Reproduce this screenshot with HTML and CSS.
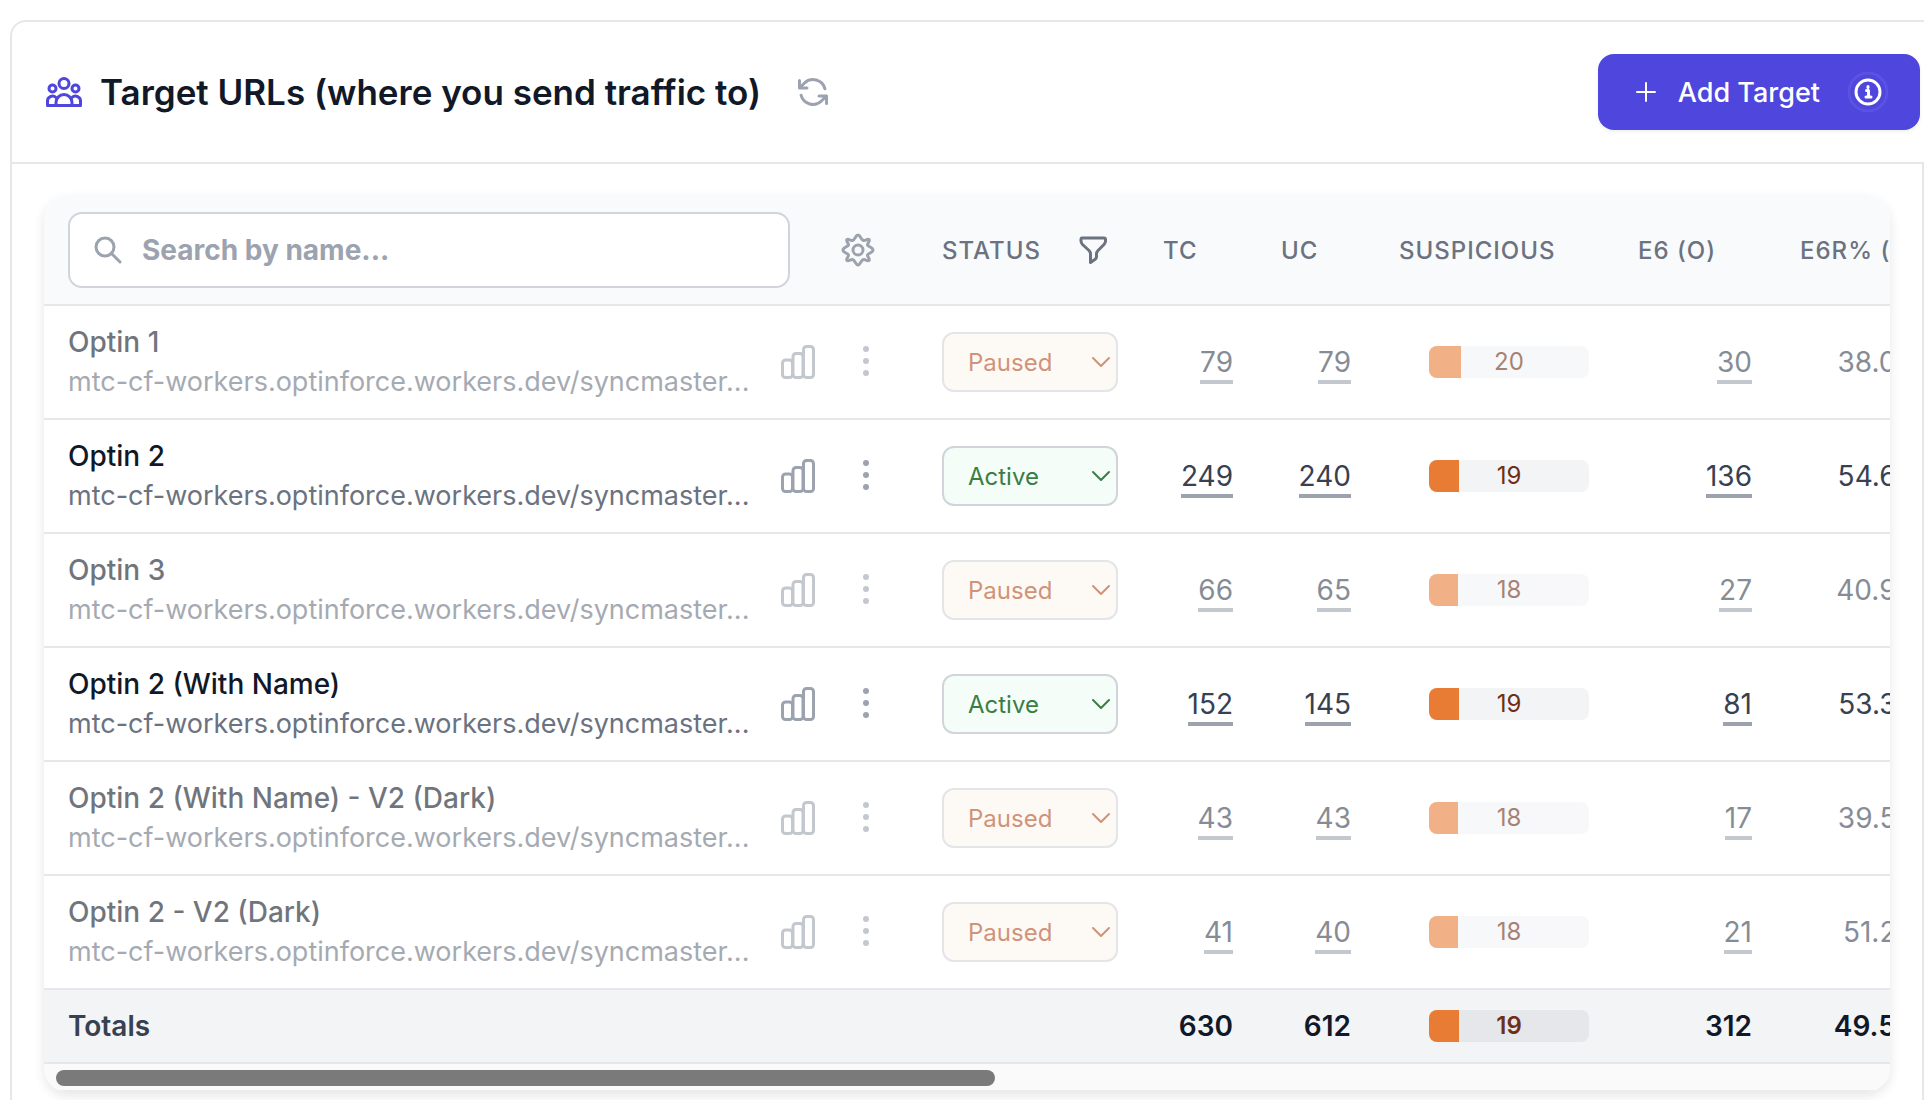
FILE: index.html
```html
<!DOCTYPE html>
<html lang="en">
<head>
    <meta charset="UTF-8">
    <meta name="viewport" content="width=device-width, initial-scale=1.0">
    <title>Target URLs</title>
    <link rel="stylesheet" href="styles.css">
</head>
<body>
    <!-- Shared icons -->
    <svg class="sprite" aria-hidden="true">
        <symbol id="icon-chart" viewBox="0 0 34 34">
            <rect x="1.5" y="15" width="10" height="17.5" rx="3"/>
            <rect x="12" y="8.5" width="10" height="24" rx="3"/>
            <rect x="22.5" y="1.5" width="10" height="31" rx="3"/>
        </symbol>
        <symbol id="icon-dots" viewBox="0 0 8 34">
            <circle cx="4" cy="4" r="3"/>
            <circle cx="4" cy="16" r="3"/>
            <circle cx="4" cy="28" r="3"/>
        </symbol>
        <symbol id="icon-chevron" viewBox="0 0 20 12">
            <path d="M2 2l8 8 8-8"/>
        </symbol>
    </svg>

    <section class="card">
        <header class="card-header">
            <svg class="icon-team" viewBox="0 0 36 30" aria-hidden="true">
                <circle cx="18" cy="6.5" r="5"/>
                <circle cx="6.5" cy="11.5" r="3.500"/>
                <circle cx="29.5" cy="11.5" r="3.500"/>
                <path d="M10 28.500V25.500a8 8 0 0 1 16 0v3ZM10 28.500H1.500V24.500a5 5 0 0 1 8.500-4M26 28.500h8.500V24.500a5 5 0 0 0-8.500-4"/>
            </svg>
            <h1>Target URLs (where you send traffic to)</h1>
            <button class="icon-button" type="button" aria-label="Refresh">
                <svg class="icon-refresh" viewBox="0 0 24 24">
                    <path transform="matrix(-1 0 0 1 24 0)" d="M16.023 9.348h4.992v-.001M2.985 19.644v-4.992m0 0h4.992m-4.993 0 3.181 3.183a8.250 8.250 0 0 0 13.803-3.700M4.031 9.865a8.250 8.250 0 0 1 13.803-3.700l3.181 3.182m0-4.991v4.990"/>
                </svg>
            </button>
            <button class="add-button" type="button">
                <svg class="icon-plus" viewBox="0 0 20 20" aria-hidden="true">
                    <path d="M10 1v18M1 10h18"/>
                </svg>
                Add Target
                <svg class="icon-info" viewBox="0 0 40 40" aria-hidden="true">
                    <circle class="halo" cx="20" cy="20" r="19"/>
                    <circle cx="20" cy="20" r="12"/>
                    <path d="M18.500 18.500H20.500V25M18 25h5M20 14.500v1"/>
                </svg>
            </button>
        </header>

        <div class="card-body">
            <div class="panel">
                <div class="table-scroll">
                    <table>
                        <colgroup>
                            <col class="col-name">
                            <col class="col-status">
                            <col class="col-count">
                            <col class="col-count">
                            <col class="col-suspicious">
                            <col class="col-event">
                            <col class="col-rate">
                        </colgroup>
                        <thead>
                            <tr>
                                <th>
                                    <div class="search-cell">
                                        <label class="search">
                                            <svg class="icon-search" viewBox="0 0 28 28" aria-hidden="true">
                                                <circle cx="11" cy="11" r="9"/>
                                                <path d="M18 18l8 8"/>
                                            </svg>
                                            <input type="text" placeholder="Search by name..." aria-label="Search by name">
                                        </label>
                                        <button class="icon-button" type="button" aria-label="Settings">
                                            <svg class="icon-gear" viewBox="0 0 40 40">
                                                <path d="M20 5C22.500 5 23 10 25.500 10.500C27.500 11 29.500 8.500 31 9.500C32.500 11 29 13.500 29.500 15C30.500 17 35 17.500 35 20C35 22.500 30.500 23 29.500 25C29 26.500 32.500 29 31 30.500C29.500 32 27.500 29 25.500 29.500C23 30 22.500 35 20 35C17.500 35 17 30 14.500 29.500C12.500 29 10.500 32 9 30.500C7.500 29 11 26.500 10.500 25C9.500 23 5 22.500 5 20C5 17.500 9.500 17 10.500 15C11 13.500 7.500 11 9 9.500C10.500 8.500 12.500 11 14.500 10.500C17 10 17.500 5 20 5Z"/>
                                                <circle cx="20" cy="20" r="5"/>
                                            </svg>
                                        </button>
                                    </div>
                                </th>
                                <th>
                                    <div class="status-head">
                                        Status
                                        <button class="icon-button" type="button" aria-label="Filter by status">
                                            <svg class="icon-filter" viewBox="0 0 28 28">
                                                <path d="M3 2H25Q26.500 2 26.500 3.500V5Q26.500 7 25 8.500L19 14.500Q17.500 16 17.500 18V20.500Q17.500 22 16.500 23L11.500 26.500V18Q11.500 16 10 14.500L3.500 8.500Q2 7 2 5V3.500Q2 2 3 2Z"/>
                                            </svg>
                                        </button>
                                    </div>
                                </th>
                                <th>TC</th>
                                <th>UC</th>
                                <th>Suspicious</th>
                                <th>E6 (O)</th>
                                <th>E6R% (O)</th>
                            </tr>
                        </thead>
                        <tbody id="targets"></tbody>
                        <tfoot>
                            <tr>
                                <td>Totals</td>
                                <td></td>
                                <td class="number">630</td>
                                <td class="number">612</td>
                                <td><div class="meter"><div class="meter-fill" style="width: 19%"></div><span>19</span></div></td>
                                <td class="number">312</td>
                                <td class="number">49.5%</td>
                            </tr>
                        </tfoot>
                    </table>
                </div>
                <div class="scroll-track">
                    <div class="scroll-thumb"></div>
                </div>
            </div>
        </div>
    </section>

    <script src="script.js"></script>
</body>
</html>
```

FILE: styles.css
```css
html {
    overflow: hidden;
}

body {
    height: 100vh;
    margin: 0;
    background-color: #fff;
    color: #374151;
    font-family: Inter, "Liberation Sans", sans-serif;
    font-size: 28px;
    overflow: hidden;
}

svg {
    display: block;
    flex: none;
    fill: none;
    stroke: currentColor;
    stroke-linecap: round;
    stroke-linejoin: round;
}

.sprite {
    position: absolute;
    width: 0;
    height: 0;
}

button {
    font-family: inherit;
    border: none;
    cursor: pointer;
}

.icon-button {
    display: flex;
    padding: 0;
    background: none;
    color: #9ca3af;
}

/* Card */
.card {
    margin: 20px 0 0 10px;
    border: 2px solid #e5e7eb;
    border-right: none;
    border-bottom: none;
    border-radius: 16px 0 0 0;
}

.card-header {
    display: flex;
    align-items: center;
    height: 140px;
    padding: 0 4px 0 34px;
    border-bottom: 2px solid #e5e7eb;
}

h1 {
    margin: 0 34px 0 18px;
    color: #111827;
    font-size: 35px;
    font-weight: 600;
    white-space: nowrap;
}

.icon-team {
    width: 36px;
    height: 30px;
    color: #4f46de;
    stroke-width: 3;
}

.icon-refresh {
    width: 36px;
    height: 36px;
    stroke-width: 2;
}

.add-button {
    display: flex;
    align-items: center;
    height: 76px;
    margin-left: auto;
    padding: 0 32px 0 38px;
    border-radius: 16px;
    background-color: #4f46de;
    color: #fff;
    font-size: 27px;
    font-weight: 500;
    box-shadow: 0 2px 4px rgba(0, 0, 0, 0.06);
}

.icon-plus {
    width: 20px;
    height: 20px;
    margin-right: 22px;
    stroke-width: 2;
}

.icon-info {
    width: 40px;
    height: 40px;
    margin-left: 28px;
    stroke-width: 3;
}

.halo {
    stroke: #5a52e2;
}

.card-body {
    padding: 32px;
    border-right: 2px solid #e5e7eb;
}

/* Table panel */
.panel {
    overflow: hidden;
    border-radius: 24px;
    box-shadow: 0 4px 12px rgba(0, 0, 0, 0.1);
}

.table-scroll {
    overflow: hidden;
}

table {
    width: 1904px;
    table-layout: fixed;
    border-collapse: separate;
    border-spacing: 0;
}

.col-name { width: 874px; }
.col-status { width: 221px; }
.col-count { width: 118px; }
.col-suspicious { width: 239px; }
.col-event { width: 162px; }
.col-rate { width: 172px; }

th {
    height: 108px;
    padding: 0 24px;
    border-bottom: 2px solid #e5e7eb;
    background-color: #f9fafb;
    color: #6b7280;
    font-size: 24px;
    font-weight: 500;
    letter-spacing: 1px;
    text-align: left;
    text-transform: uppercase;
    white-space: nowrap;
}

.search-cell {
    display: flex;
    align-items: center;
    gap: 48px;
}

.search {
    display: flex;
    align-items: center;
    box-sizing: border-box;
    width: 722px;
    height: 76px;
    padding: 0 24px;
    border: 2px solid #d1d5db;
    border-radius: 14px;
    background-color: #fff;
    color: #9ca3af;
}

.search input {
    flex: 1;
    min-width: 0;
    padding: 0 0 0 20px;
    border: none;
    outline: none;
    background: none;
    color: #374151;
    font-family: inherit;
    font-size: 28px;
    font-weight: 700;
}

.search input::placeholder {
    color: #9ca3af;
}

.icon-search {
    width: 28px;
    height: 28px;
    stroke-width: 3;
}

.icon-gear {
    width: 40px;
    height: 40px;
    stroke-width: 3;
}

.status-head {
    display: flex;
    align-items: center;
    gap: 38px;
}

.status-head .icon-button {
    color: #6b7280;
}

.icon-filter {
    width: 28px;
    height: 28px;
    stroke-width: 3;
}

tbody td {
    box-sizing: border-box;
    height: 114px;
    padding: 0 24px;
    border-bottom: 2px solid #e5e7eb;
    background-color: #fff;
}

.number {
    text-align: right;
}

.name-cell {
    display: flex;
    align-items: center;
}

.target {
    width: 682px;
    margin-right: 31px;
    line-height: 40px;
    white-space: nowrap;
}

.target-name {
    color: #111827;
    font-weight: 500;
}

.target-url {
    color: #6b7280;
    font-size: 27px;
}

.icon-chart {
    width: 34px;
    height: 34px;
    stroke-width: 3;
}

.dots-button {
    margin-left: 47px;
}

.icon-dots {
    width: 8px;
    height: 34px;
    fill: currentColor;
    stroke: none;
}

.status {
    display: grid;
    align-items: center;
    width: 176px;
}

.status select {
    grid-area: 1 / 1;
    box-sizing: border-box;
    width: 176px;
    height: 60px;
    padding: 0 24px;
    border: 2px solid #d1d5db;
    border-radius: 12px;
    appearance: none;
    color: inherit;
    font-family: inherit;
    font-size: 24px;
}

.status svg {
    grid-area: 1 / 1;
    justify-self: end;
    width: 20px;
    height: 12px;
    margin-right: 7px;
    stroke-width: 2;
    pointer-events: none;
}

.status.active { color: #3a7d44; }
.status.paused { color: #b14b21; }

.active select { background-color: #f4fdf7; }
.paused select { background-color: #fdf7ef; }

.count {
    display: block;
    width: fit-content;
    margin-left: auto;
    padding-top: 4px;
    border-bottom: 4px solid #9ca3af;
    color: #374151;
    line-height: 36px;
    text-decoration: none;
}

/* Suspicious clicks bar */
.meter {
    display: grid;
    width: 160px;
    height: 32px;
    margin-left: 30px;
    overflow: hidden;
    border-radius: 8px;
    background-color: #f3f4f6;
    color: #6f2f17;
    font-size: 24px;
    line-height: 32px;
    text-align: center;
}

.meter-fill,
.meter span {
    grid-area: 1 / 1;
}

.meter-fill {
    background-color: #e97c35;
}

/* Paused targets are dimmed */
.dimmed .name-cell,
.dimmed .status,
.dimmed .count,
.dimmed .meter,
.dimmed .rate {
    opacity: 0.6;
}

tfoot td {
    height: 72px;
    padding: 0 24px;
    border-bottom: 2px solid #e5e7eb;
    background-color: #f3f4f6;
    color: #111827;
    font-weight: 600;
}

tfoot td:first-child {
    color: #374151;
}

tfoot .meter {
    background-color: #e5e7eb;
}

.scroll-track {
    padding: 6px 28px 4px 12px;
    border-bottom: 2px solid #ebebeb;
    background-color: #fafafa;
}

.scroll-thumb {
    width: 52%;
    height: 16px;
    border-radius: 8px;
    background-color: #7a7a7a;
}
```

FILE: script.js
```js
const targets = [
    { name: 'Optin 1', active: false, tc: 79, uc: 79, suspicious: 20, e6: 30, rate: '38.0%' },
    { name: 'Optin 2', active: true, tc: 249, uc: 240, suspicious: 19, e6: 136, rate: '54.6%' },
    { name: 'Optin 3', active: false, tc: 66, uc: 65, suspicious: 18, e6: 27, rate: '40.9%' },
    { name: 'Optin 2 (With Name)', active: true, tc: 152, uc: 145, suspicious: 19, e6: 81, rate: '53.3%' },
    { name: 'Optin 2 (With Name) - V2 (Dark)', active: false, tc: 43, uc: 43, suspicious: 18, e6: 17, rate: '39.5%' },
    { name: 'Optin 2 - V2 (Dark)', active: false, tc: 41, uc: 40, suspicious: 18, e6: 21, rate: '51.2%' }
];

const targetUrl = 'mtc-cf-workers.optinforce.workers.dev/syncmaster...';

function displayTargets() {
    const container = document.getElementById('targets');

    targets.forEach(target => {
        const row = document.createElement('tr');
        if (!target.active) {
            row.className = 'dimmed';
        }

        row.innerHTML = `
            <td>
                <div class="name-cell">
                    <div class="target">
                        <div class="target-name">${target.name}</div>
                        <div class="target-url">${targetUrl}</div>
                    </div>
                    <button class="icon-button" type="button" aria-label="Statistics"><svg class="icon-chart"><use href="#icon-chart"/></svg></button>
                    <button class="icon-button dots-button" type="button" aria-label="More"><svg class="icon-dots"><use href="#icon-dots"/></svg></button>
                </div>
            </td>
            <td>
                <div class="status ${target.active ? 'active' : 'paused'}">
                    <select aria-label="Status of ${target.name}">
                        <option ${target.active ? 'selected' : ''}>Active</option>
                        <option ${target.active ? '' : 'selected'}>Paused</option>
                    </select>
                    <svg><use href="#icon-chevron"/></svg>
                </div>
            </td>
            <td class="number"><a class="count" href="#">${target.tc}</a></td>
            <td class="number"><a class="count" href="#">${target.uc}</a></td>
            <td><div class="meter"><div class="meter-fill" style="width: ${target.suspicious}%"></div><span>${target.suspicious}</span></div></td>
            <td class="number"><a class="count" href="#">${target.e6}</a></td>
            <td class="number"><span class="rate">${target.rate}</span></td>
        `;

        container.appendChild(row);
    });
}

displayTargets();
```
